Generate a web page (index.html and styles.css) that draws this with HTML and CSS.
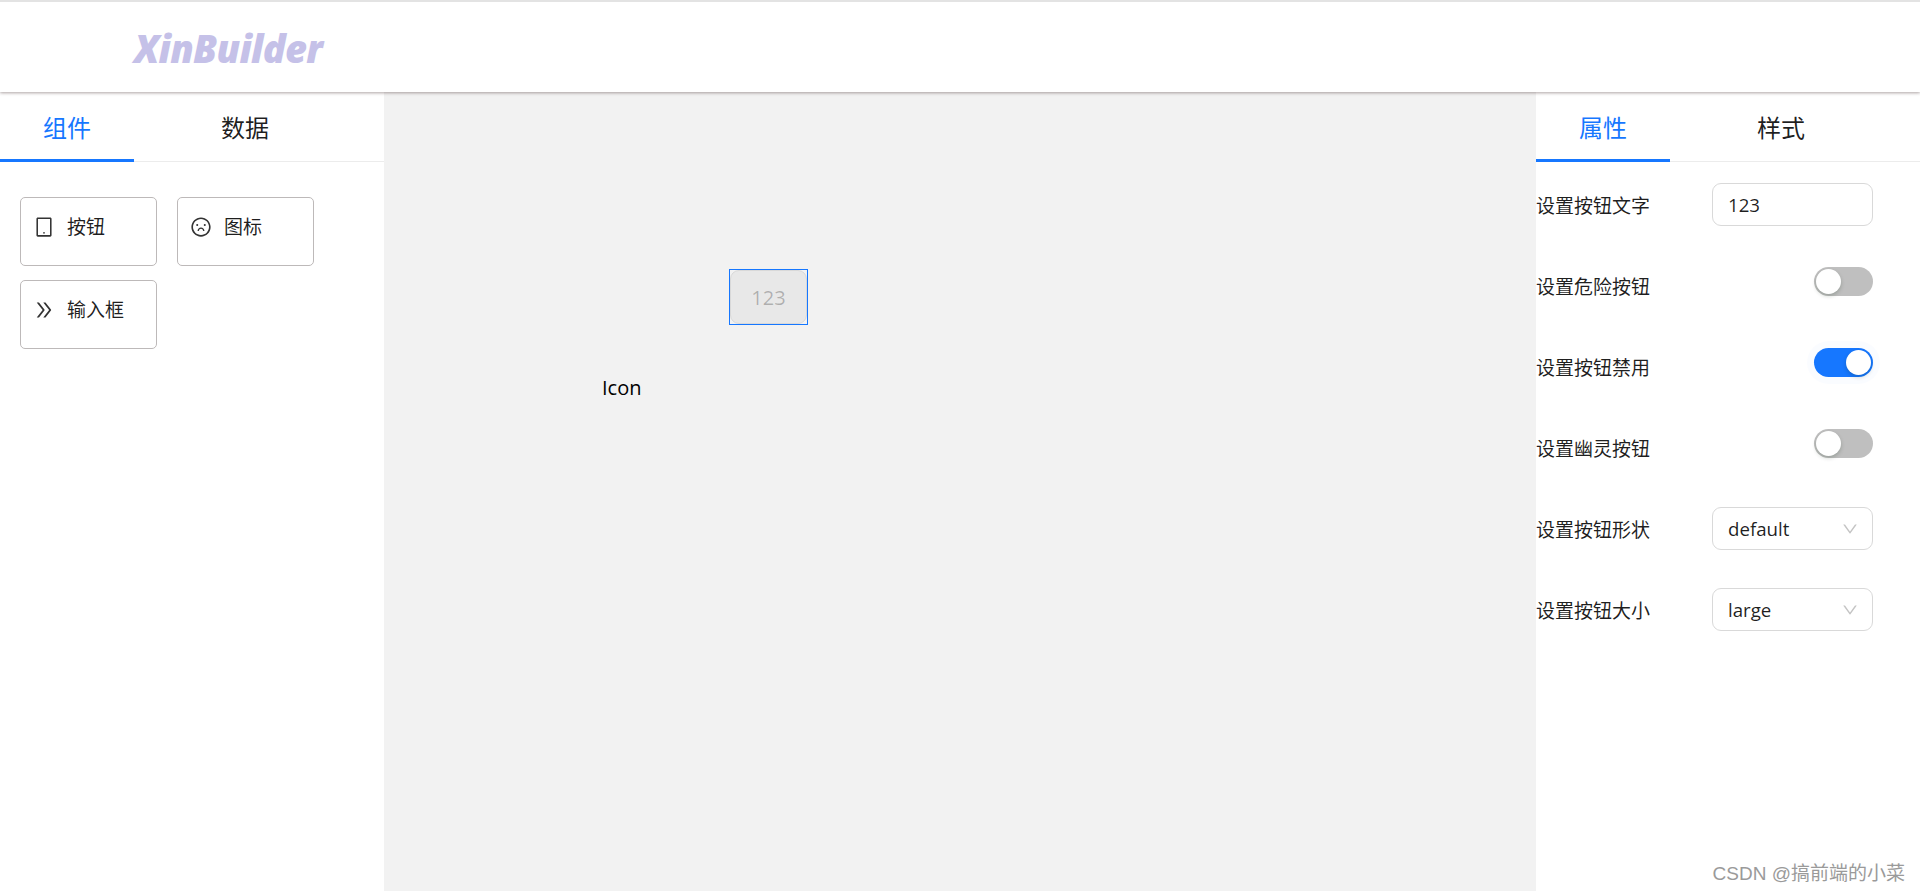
FILE: index.html
```html
<!DOCTYPE html>
<html lang="zh-CN">
<head>
    <meta charset="UTF-8">
    <meta name="viewport" content="width=device-width, initial-scale=1.0">
    <title>XinBuilder</title>
    <link rel="stylesheet" href="styles.css">
</head>
<body>
    <!-- 顶部 -->
    <header class="header">
        <div class="logo">XinBuilder</div>
    </header>

    <div class="container">
        <!-- 左侧组件面板 -->
        <aside class="side-panel">
            <div class="tabs">
                <div class="tab active">组件</div>
                <div class="tab">数据</div>
            </div>
            <div class="comp-list">
                <div class="comp-card">
                    <svg class="comp-icon" viewBox="0 0 1024 1024" fill="currentColor"><path d="M800 64H224c-35.3 0-64 28.7-64 64v768c0 35.3 28.7 64 64 64h576c35.3 0 64-28.7 64-64V128c0-35.3-28.7-64-64-64zm-8 824H232V136h560v752zM472 784a40 40 0 1 0 80 0 40 40 0 1 0-80 0z"/></svg>
                    <span>按钮</span>
                </div>
                <div class="comp-card">
                    <svg class="comp-icon" viewBox="0 0 1024 1024" fill="currentColor"><path d="M288 421a48 48 0 1 0 96 0 48 48 0 1 0-96 0zm352 0a48 48 0 1 0 96 0 48 48 0 1 0-96 0zM512 64C264.6 64 64 264.6 64 512s200.6 448 448 448 448-200.6 448-448S759.4 64 512 64zm263 711c-34.2 34.2-74 61-118.3 79.8C611 874.2 562.3 884 512 884c-50.3 0-99-9.8-144.8-29.2A370.4 370.4 0 0 1 248.9 775c-34.2-34.2-61-74-79.8-118.3C149.8 611 140 562.3 140 512s9.8-99 29.2-144.8A370.4 370.4 0 0 1 249 248.9c34.2-34.2 74-61 118.3-79.8C413 149.8 461.7 140 512 140c50.3 0 99 9.8 144.8 29.2A370.4 370.4 0 0 1 775.1 249c34.2 34.2 61 74 79.8 118.3C874.2 413 884 461.7 884 512s-9.8 99-29.2 144.8A368.89 368.89 0 0 1 775 775zM512 533c-85.5 0-155.6 67.3-160 151.6a8 8 0 0 0 8 8.4h48.1c4.2 0 7.8-3.2 8.1-7.4C420 636.1 461.5 597 512 597s92.1 39.1 95.8 88.6c.3 4.2 3.9 7.4 8.1 7.4H664a8 8 0 0 0 8-8.4C667.6 600.3 597.5 533 512 533z"/></svg>
                    <span>图标</span>
                </div>
                <div class="comp-card">
                    <svg class="comp-icon" viewBox="0 0 1024 1024" fill="currentColor"><path d="M533.2 492.3L277.9 166.1c-3-3.9-7.6-6.1-12.6-6.1H188c-6.7 0-10.4 7.7-6.3 12.9L447.1 512 181.7 851.1A7.98 7.98 0 0 0 188 864h77.3c4.9 0 9.6-2.3 12.6-6.1l255.3-326.1c9.1-11.7 9.1-27.9 0-39.5zm304 0L581.9 166.1c-3-3.9-7.6-6.1-12.6-6.1H492c-6.7 0-10.4 7.7-6.3 12.9L751.1 512 485.7 851.1A7.98 7.98 0 0 0 492 864h77.3c4.9 0 9.6-2.3 12.6-6.1l255.3-326.1c9.1-11.7 9.1-27.9 0-39.5z"/></svg>
                    <span>输入框</span>
                </div>
            </div>
        </aside>

        <!-- 中间画布 -->
        <main class="canvas">
            <div class="canvas-item selected">
                <button class="preview-btn" disabled>123</button>
            </div>
            <div class="canvas-icon">Icon</div>
        </main>

        <!-- 右侧属性面板 -->
        <aside class="side-panel">
            <div class="tabs">
                <div class="tab active">属性</div>
                <div class="tab">样式</div>
            </div>
            <div class="prop-list">
                <div class="prop-row">
                    <label>设置按钮文字</label>
                    <input class="field" type="text" value="123">
                </div>
                <div class="prop-row">
                    <label>设置危险按钮</label>
                    <span class="switch"></span>
                </div>
                <div class="prop-row">
                    <label>设置按钮禁用</label>
                    <span class="switch on"></span>
                </div>
                <div class="prop-row">
                    <label>设置幽灵按钮</label>
                    <span class="switch"></span>
                </div>
                <div class="prop-row">
                    <label>设置按钮形状</label>
                    <div class="field select">
                        <span>default</span>
                        <svg class="arrow" viewBox="0 0 1024 1024" fill="currentColor"><path d="M884 256h-75c-5.1 0-9.9 2.5-12.9 6.6L512 654.2 227.9 262.6c-3-4.1-7.8-6.6-12.9-6.6h-75c-6.5 0-10.3 7.4-6.5 12.7l352.6 486.1c12.8 17.6 39 17.6 51.7 0l352.6-486.1c3.9-5.3.1-12.7-6.4-12.7z"/></svg>
                    </div>
                </div>
                <div class="prop-row">
                    <label>设置按钮大小</label>
                    <div class="field select">
                        <span>large</span>
                        <svg class="arrow" viewBox="0 0 1024 1024" fill="currentColor"><path d="M884 256h-75c-5.1 0-9.9 2.5-12.9 6.6L512 654.2 227.9 262.6c-3-4.1-7.8-6.6-12.9-6.6h-75c-6.5 0-10.3 7.4-6.5 12.7l352.6 486.1c12.8 17.6 39 17.6 51.7 0l352.6-486.1c3.9-5.3.1-12.7-6.4-12.7z"/></svg>
                    </div>
                </div>
            </div>
        </aside>
    </div>

    <div class="watermark">CSDN @搞前端的小菜</div>
</body>
</html>
```

FILE: styles.css
```css
* {
    margin: 0;
    padding: 0;
    box-sizing: border-box;
}

html, body {
    height: 100%;
    overflow: hidden;
}

body {
    font-family: 'Open Sans', 'Noto Sans CJK SC', sans-serif;
    font-size: 19px;
    color: rgba(0, 0, 0, 0.88);
    background: #ffffff;
    display: flex;
    flex-direction: column;
}

/* 顶部 */
.header {
    height: 92px;
    flex-shrink: 0;
    border-top: 2px solid #e3e3e3;
    padding: 2px 0 0 134px;
    display: flex;
    align-items: center;
    background: #ffffff;
    box-shadow: 0 1px 3px rgba(70, 50, 50, 0.45);
    position: relative;
    z-index: 1;
}

.logo {
    font-size: 38px;
    font-weight: 800;
    font-style: italic;
    color: #c5c1e8;
    letter-spacing: -0.7px;
}

/* 主容器 */
.container {
    flex: 1;
    display: flex;
    min-height: 0;
}

.side-panel {
    width: 384px;
    flex-shrink: 0;
    background: #ffffff;
}

/* 标签页 */
.tabs {
    height: 70px;
    display: flex;
    gap: 44px;
    border-bottom: 1px solid #ececec;
}

.tab {
    width: 134px;
    display: flex;
    align-items: center;
    justify-content: center;
    font-size: 24px;
    margin-bottom: -1px;
    padding-bottom: 2px;
}

.tab.active {
    color: #1677ff;
    border-bottom: 3px solid #1677ff;
    padding: 1px 0 0;
}

/* 组件列表 */
.comp-list {
    display: flex;
    flex-wrap: wrap;
    gap: 14px 20px;
    padding: 35px 20px;
}

.comp-card {
    width: 137px;
    height: 69px;
    border: 1px solid #bdb9b9;
    border-radius: 5px;
    padding: 16px 12px;
    display: flex;
    align-items: flex-start;
    gap: 12px;
    line-height: 26px;
}

.comp-icon {
    width: 22px;
    height: 22px;
    margin-top: 2px;
    flex-shrink: 0;
    color: #333333;
}

/* 画布 */
.canvas {
    flex: 1;
    background: #f2f2f2;
    position: relative;
}

.canvas-item {
    position: absolute;
    left: 345px;
    top: 177px;
    width: 79px;
    height: 56px;
}

.canvas-item.selected {
    border: 1px solid #1677ff;
}

.preview-btn {
    width: 100%;
    height: 100%;
    font-family: inherit;
    font-size: 20px;
    color: rgba(0, 0, 0, 0.25);
    background: rgba(0, 0, 0, 0.04);
    border: 1px solid #d9d9d9;
    border-radius: 9px;
}

.canvas-icon {
    position: absolute;
    left: 218px;
    top: 282px;
    font-size: 20px;
    color: #000000;
}

/* 属性列表 */
.prop-list {
    padding-top: 21px;
    display: flex;
    flex-direction: column;
    gap: 38px;
}

.prop-row {
    height: 43px;
    width: 337px;
    display: flex;
    align-items: center;
    justify-content: space-between;
}

.prop-row label {
    white-space: nowrap;
}

.field {
    width: 161px;
    height: 43px;
    border: 1px solid #d9d9d9;
    border-radius: 9px;
    padding: 0 13px 0 15px;
    font: inherit;
    font-size: 18.67px;
    color: rgba(0, 0, 0, 0.88);
    background: #ffffff;
}

.select {
    display: flex;
    align-items: center;
    justify-content: space-between;
}

.arrow {
    width: 18px;
    height: 18px;
    color: #c4c4c4;
}

/* 开关 */
.switch {
    width: 59px;
    height: 29px;
    border-radius: 15px;
    background: #bfbfbf;
    margin-bottom: 9px;
    position: relative;
}

.switch::after {
    content: '';
    position: absolute;
    left: 2px;
    top: 2px;
    width: 25px;
    height: 25px;
    border-radius: 50%;
    background: #ffffff;
    box-shadow: 0 2px 4px rgba(0, 35, 11, 0.2);
}

.switch.on {
    background: #1677ff;
    box-shadow: 0 0 0 7px rgba(22, 119, 255, 0.02);
}

.switch.on::after {
    left: 32px;
}

/* 水印 */
.watermark {
    position: absolute;
    right: 15px;
    bottom: 6px;
    font-family: 'Liberation Sans', 'Noto Sans CJK SC', sans-serif;
    font-size: 19px;
    color: #9a9a9a;
}
```
